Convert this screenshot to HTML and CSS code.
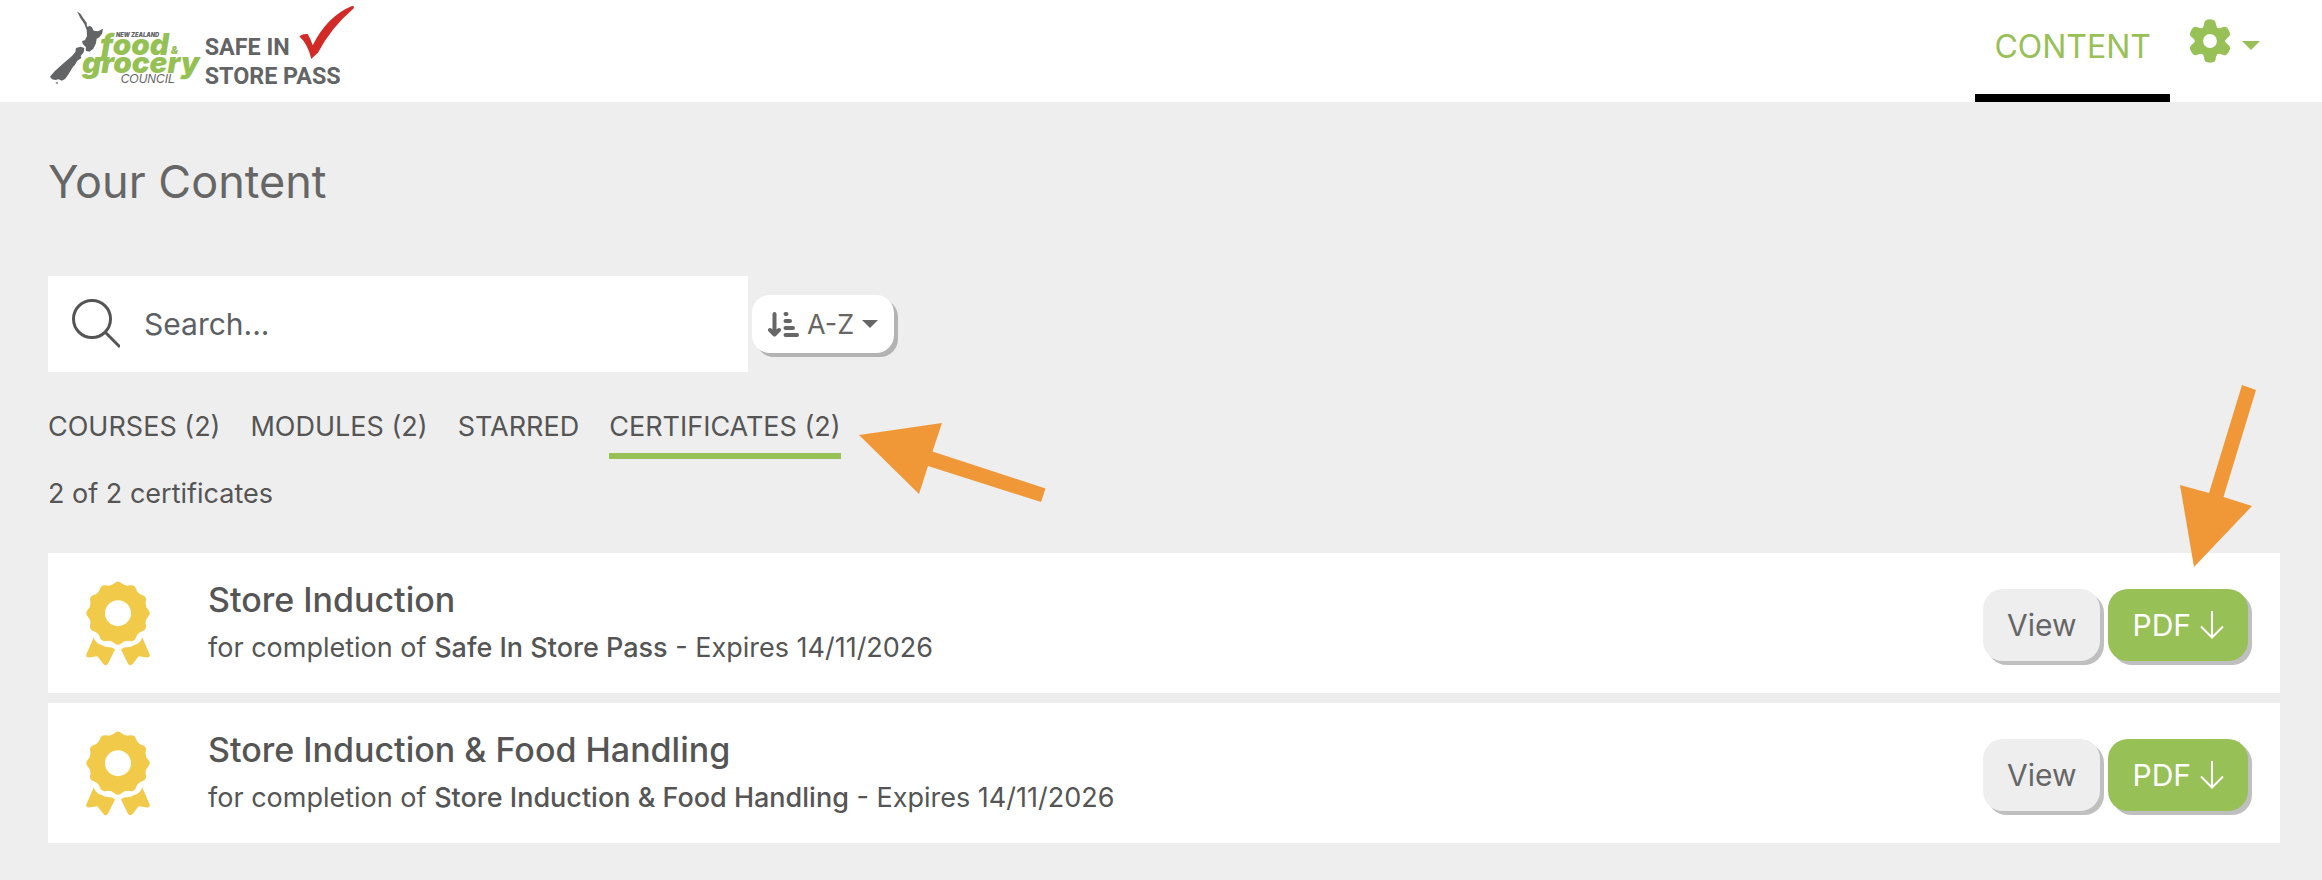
FILE: index.html
```html
<!DOCTYPE html>
<html lang="en">
<head>
  <meta charset="UTF-8">
  <meta name="viewport" content="width=device-width, initial-scale=1.0">
  <title>Your Content</title>
  <link rel="stylesheet" href="styles.css">
</head>
<body>

  <!-- Shared icons -->
  <svg class="sprite" aria-hidden="true">
    <symbol id="award" viewBox="-96 -96 192 254">
      <path fill-rule="evenodd" d="M90.1 -10.7Q100 0 90.1 10.7T83.4 35.7T72.6 54.3T54.3 72.6T35.7 83.4T10.7 90.1T-10.7 90.1T-35.7 83.4T-54.3 72.6T-72.6 54.3T-83.4 35.7T-90.1 10.7T-90.1 -10.7T-83.4 -35.7T-72.6 -54.3T-54.3 -72.6T-35.7 -83.4T-10.7 -90.1T10.7 -90.1T35.7 -83.4T54.3 -72.6T72.6 -54.3T83.4 -35.7T90.1 -10.7ZM39 0A39 39 0 1 0 -39 0A39 39 0 1 0 39 0Z"/>
      <path d="M-73 73L-95 124Q-97 133 -88 133L-62 129L-43 153Q-35 160 -30 152L-9 109Q-18 101 -24 102Q-38 104 -50 95Q-66 92 -73 73Z"/>
      <path d="M73 73L95 124Q97 133 88 133L62 129L43 153Q35 160 30 152L9 109Q18 101 24 102Q38 104 50 95Q66 92 73 73Z"/>
    </symbol>
    <symbol id="arrow-down" viewBox="0 0 24 28">
      <path d="M12 0V27M1 15.500L12 26.500L23 15.500" fill="none" stroke="currentColor" stroke-width="2"/>
    </symbol>
    <symbol id="caret" viewBox="0 0 18 9">
      <path d="M0 0H18L9 9Z" fill="currentColor"/>
    </symbol>
  </svg>

  <!-- Top bar -->
  <header class="topbar">
    <a href="#" class="logo" aria-label="Safe In Store Pass">
      <svg viewBox="24 0 930 270" width="310" height="90">
        <g fill="#636466">
          <path d="M111 34L122 42L130 55L140 68L141 80L150 78L156 82L161 92L174 94L189 86L186 101L178 112L170 116L168 130L160 146L148 155L137 152L138 142L128 131L126 124L135 120L141 108L140 90L133 72L121 54Z"/>
          <path d="M122 140L133 144L131 157L122 168L124 174L112 182L104 196L99 200L86 222L76 236L66 242L56 238L46 240L36 238L30 230L44 214L62 197L82 180L96 168L106 156L108 144Z"/>
          <path d="M46 248L54 246L52 253Z"/>
        </g>
        <text class="logo-country" x="228" y="111">NEW ZEALAND</text>
        <text class="logo-food" x="180" y="166">food</text>
        <text class="logo-amp" x="392" y="161">&amp;</text>
        <text class="logo-food" x="126" y="219">grocery</text>
        <text class="logo-council" x="242" y="250">COUNCIL</text>
        <text class="logo-pass" x="494" y="166">SAFE IN</text>
        <text class="logo-pass" x="494" y="253">STORE PASS</text>
        <path fill="#d22a27" d="M778 109Q790 100 803 102Q812 116 818 136Q862 48 936 18Q946 18 940 26Q872 84 834 158Q824 166 814 177Q803 132 778 109Z"/>
      </svg>
    </a>
    <nav class="nav">
      <a href="#" class="nav-link">CONTENT</a>
      <button type="button" class="settings" aria-label="Settings">
        <svg class="gear" viewBox="-66 -67 132 134" width="44" height="44">
          <g fill="currentColor">
            <circle r="46"/>
            <path id="teeth" d="M-22 -40Q-18 -46 -17 -56Q-16 -63 -9 -65Q0 -67 9 -65Q16 -63 17 -56Q18 -46 22 -40L22 40Q18 46 17 56Q16 63 9 65Q0 67 -9 65Q-16 63 -17 56Q-18 46 -22 40Z"/>
            <use href="#teeth" transform="rotate(60)"/>
            <use href="#teeth" transform="rotate(120)"/>
          </g>
          <circle r="21" fill="#fff"/>
        </svg>
        <svg class="caret" width="18" height="9"><use href="#caret"/></svg>
      </button>
    </nav>
  </header>

  <main class="page">
    <h1>Your Content</h1>

    <!-- Search and sort -->
    <div class="filters">
      <label class="search">
        <svg viewBox="0 0 48 50" width="48" height="50" fill="none" stroke="#555" stroke-width="3">
          <circle cx="20" cy="20" r="18.500"/>
          <path d="M33 33L48 48"/>
        </svg>
        <input type="text" placeholder="Search..." aria-label="Search">
      </label>
      <label class="sort">
        <svg viewBox="0 0 31 25" width="31" height="25" fill="none" stroke="currentColor" stroke-width="4" stroke-linecap="round" stroke-linejoin="round">
          <path d="M6.500 2V22M2 18L6.500 22.500L11 18"/>
          <path d="M17.500 2H18.500M17.500 9H22M17.500 16H25M17.500 23H29"/>
        </svg>
        <select aria-label="Sort order">
          <option>A-Z</option>
          <option>Z-A</option>
        </select>
        <svg width="16" height="8"><use href="#caret"/></svg>
      </label>
    </div>

    <!-- Tabs -->
    <nav class="tabs">
      <a href="#" class="tab">COURSES (2)</a>
      <a href="#" class="tab">MODULES (2)</a>
      <a href="#" class="tab">STARRED</a>
      <a href="#" class="tab active">CERTIFICATES (2)
        <svg class="pointer pointer-tab" viewBox="0 0 187 80" width="187" height="80"><path d="M0 12L83 0L73.500 28.500L186.500 65.500L182 79L69 43L60 71Z"/></svg>
      </a>
    </nav>
    <p class="count">2 of 2 certificates</p>

    <!-- Certificates -->
    <div class="list">
      <article class="card">
        <svg class="award" width="64" height="85"><use href="#award"/></svg>
        <div class="info">
          <h2>Store Induction</h2>
          <p>for completion of <strong>Safe In Store Pass</strong> - Expires 14/11/2026</p>
        </div>
        <div class="actions">
          <button type="button" class="btn">View</button>
          <button type="button" class="btn btn-green">PDF <svg width="24" height="28"><use href="#arrow-down"/></svg></button>
        </div>
      </article>
      <article class="card">
        <svg class="award" width="64" height="85"><use href="#award"/></svg>
        <div class="info">
          <h2>Store Induction &amp; Food Handling</h2>
          <p>for completion of <strong>Store Induction &amp; Food Handling</strong> - Expires 14/11/2026</p>
        </div>
        <div class="actions">
          <button type="button" class="btn">View</button>
          <button type="button" class="btn btn-green">PDF <svg width="24" height="28"><use href="#arrow-down"/></svg></button>
        </div>
      </article>
      <svg class="pointer pointer-pdf" viewBox="0 0 77 182" width="77" height="182"><path d="M62 0L76 5L43.500 112L72 121L14 182L0 100L29 108Z"/></svg>
    </div>
  </main>

</body>
</html>
```
FILE: styles.css
```css
* {
  box-sizing: border-box;
}
body {
  margin: 0;
  background: #eee;
  color: #555;
  font-family: Inter, "Liberation Sans", sans-serif;
  font-size: 27px;
}
h1, h2, p {
  margin: 0;
}
a {
  color: inherit;
  text-decoration: none;
}
button, input, select {
  font: inherit;
  color: inherit;
  border: 0;
  padding: 0;
  background: none;
}
svg {
  display: block;
  flex: none;
}
.sprite {
  position: absolute;
  width: 0;
  height: 0;
}

/* Top bar */
.topbar {
  display: flex;
  justify-content: space-between;
  height: 102px;
  padding: 0 62px 0 48px;
  background: #fff;
}
.logo-country {
  font: italic 900 17px Inter, sans-serif;
  fill: #636466;
}
.logo-food {
  font: italic 900 89px Inter, sans-serif;
  fill: #95c154;
}
.logo-amp {
  font: italic 900 32px Inter, sans-serif;
  fill: #95c154;
}
.logo-council {
  font: italic 36px "Liberation Sans", sans-serif;
  fill: #636466;
}
.logo-pass {
  font: bold 70px Roboto, sans-serif;
  fill: #636466;
}
.nav {
  display: flex;
  color: #97c056;
}
.nav-link {
  padding: 27px 19px 0;
  border-bottom: 8px solid #000;
  font-size: 32px;
  line-height: 40px;
}
.settings {
  display: flex;
  align-items: center;
  gap: 10px;
  height: 82px;
  margin-left: 18px;
  color: #97c056;
}
.settings .caret {
  margin-top: 8px;
}

/* Page */
.page {
  padding: 48px 42px 36px 48px;
}
h1 {
  font-size: 45px;
  font-weight: 400;
  line-height: 64px;
  color: #666;
}
.filters {
  display: flex;
  align-items: center;
  gap: 4px;
  margin-top: 62px;
}
.search {
  display: flex;
  align-items: center;
  gap: 24px;
  width: 700px;
  height: 96px;
  padding: 0 24px;
  background: #fff;
}
.search input {
  flex: 1;
  min-width: 0;
  height: 96px;
  font-size: 30px;
  outline: 0;
}
.search input::placeholder {
  color: #5c6064;
  opacity: 1;
}
.sort {
  display: flex;
  align-items: center;
  gap: 8px;
  height: 58px;
  padding: 0 16px;
  border-radius: 18px;
  background: #fff;
  box-shadow: 4px 4px 0 #b3b3b3;
  color: #666;
}
.sort select {
  appearance: none;
  field-sizing: content;
}

/* Tabs */
.tabs {
  display: flex;
  gap: 30px;
  margin-top: 36px;
}
.tab {
  position: relative;
  padding-bottom: 7px;
  border-bottom: 6px solid transparent;
  line-height: 38px;
}
.tab.active {
  border-color: #97c056;
}
.count {
  margin-top: 16px;
  line-height: 38px;
}

/* Orange pointers lying over the page */
.pointer {
  position: absolute;
  fill: #f09837;
}
.pointer-tab {
  left: calc(100% + 18px);
  top: 15px;
}
.pointer-pdf {
  right: 23px;
  top: -168px;
}

/* Certificate cards */
.list {
  position: relative;
  display: flex;
  flex-direction: column;
  gap: 10px;
  margin-top: 40px;
}
.card {
  display: flex;
  align-items: center;
  height: 140px;
  padding: 0 32px 0 38px;
  background: #fff;
}
.award {
  fill: #f2ca49;
}
.info {
  flex: 1;
  padding-top: 2px;
  margin-left: 58px;
}
h2 {
  font-size: 34px;
  font-weight: 500;
  line-height: 48px;
}
.info p {
  line-height: 48px;
}
.info strong {
  font-weight: 500;
}
.actions {
  display: flex;
  gap: 8px;
  padding-top: 4px;
}
.btn {
  display: flex;
  align-items: center;
  gap: 9px;
  height: 72px;
  padding: 0 24px;
  border-radius: 20px;
  background: #eee;
  box-shadow: 4px 4px 0 #bfbfbf;
  color: #666;
  font-size: 30px;
}
.btn-green {
  background: #97c056;
  color: #fff;
}
```
